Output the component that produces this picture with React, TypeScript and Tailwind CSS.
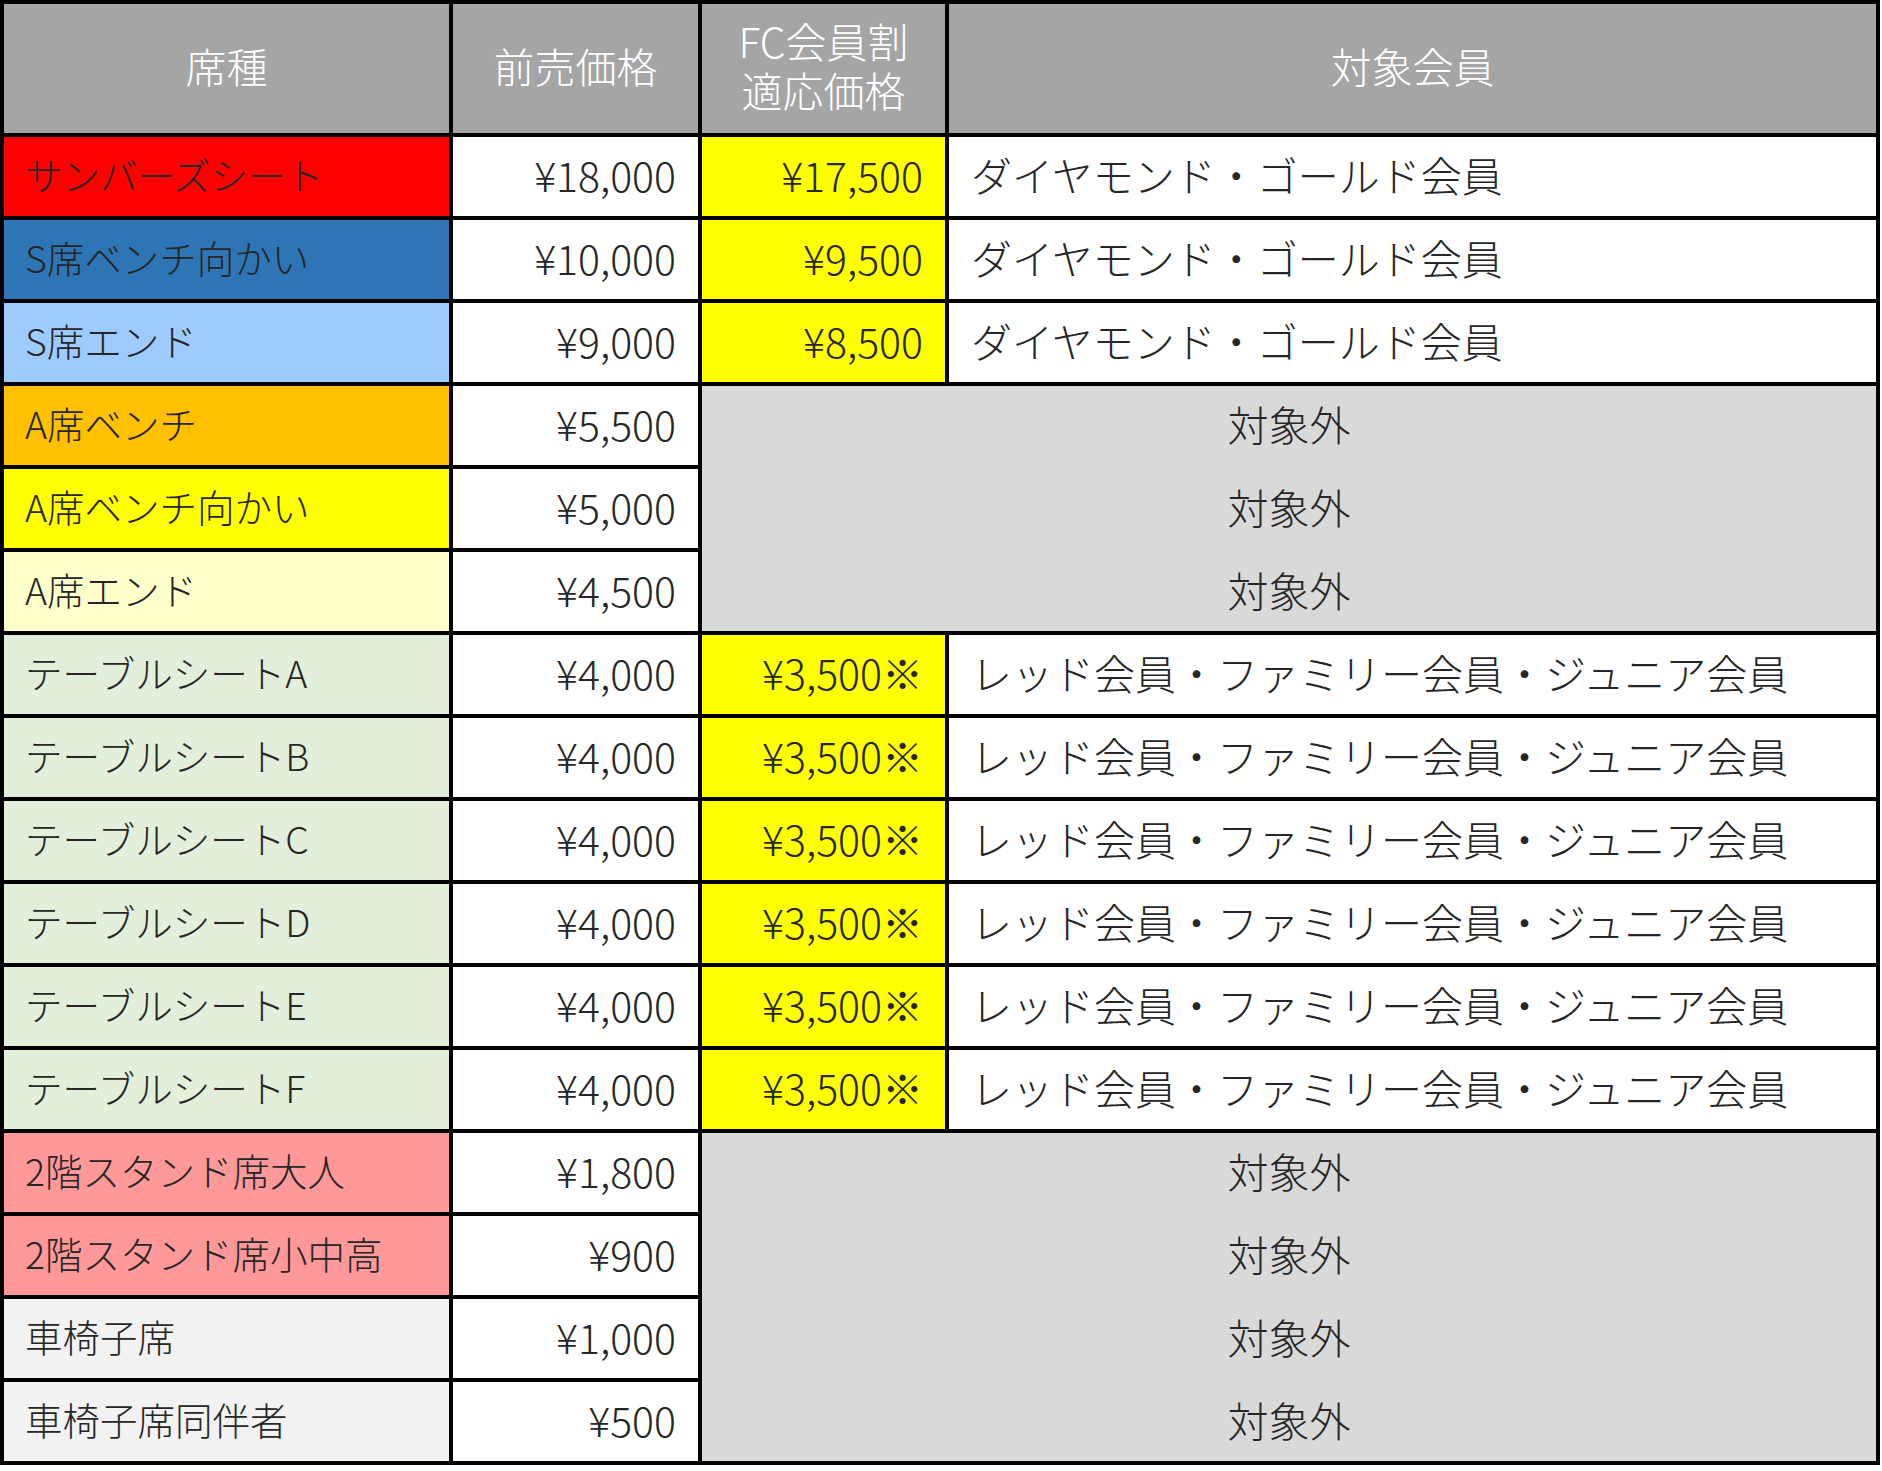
type Row = {
  name: string;
  bg: string;
  price: string;
  fc?: string;
  target?: string;
};

const rows: Row[] = [
  { name: "サンバーズシート", bg: "bg-[#ff0000]", price: "¥18,000", fc: "¥17,500", target: "ダイヤモンド・ゴールド会員" },
  { name: "S席ベンチ向かい", bg: "bg-[#2e75b6]", price: "¥10,000", fc: "¥9,500", target: "ダイヤモンド・ゴールド会員" },
  { name: "S席エンド", bg: "bg-[#9dcbfd]", price: "¥9,000", fc: "¥8,500", target: "ダイヤモンド・ゴールド会員" },
  { name: "A席ベンチ", bg: "bg-[#ffc000]", price: "¥5,500" },
  { name: "A席ベンチ向かい", bg: "bg-[#ffff00]", price: "¥5,000" },
  { name: "A席エンド", bg: "bg-[#ffffcc]", price: "¥4,500" },
  { name: "テーブルシートA", bg: "bg-[#e2efda]", price: "¥4,000", fc: "¥3,500※", target: "レッド会員・ファミリー会員・ジュニア会員" },
  { name: "テーブルシートB", bg: "bg-[#e2efda]", price: "¥4,000", fc: "¥3,500※", target: "レッド会員・ファミリー会員・ジュニア会員" },
  { name: "テーブルシートC", bg: "bg-[#e2efda]", price: "¥4,000", fc: "¥3,500※", target: "レッド会員・ファミリー会員・ジュニア会員" },
  { name: "テーブルシートD", bg: "bg-[#e2efda]", price: "¥4,000", fc: "¥3,500※", target: "レッド会員・ファミリー会員・ジュニア会員" },
  { name: "テーブルシートE", bg: "bg-[#e2efda]", price: "¥4,000", fc: "¥3,500※", target: "レッド会員・ファミリー会員・ジュニア会員" },
  { name: "テーブルシートF", bg: "bg-[#e2efda]", price: "¥4,000", fc: "¥3,500※", target: "レッド会員・ファミリー会員・ジュニア会員" },
  { name: "2階スタンド席大人", bg: "bg-[#ff9999]", price: "¥1,800" },
  { name: "2階スタンド席小中高", bg: "bg-[#ff9999]", price: "¥900" },
  { name: "車椅子席", bg: "bg-[#f2f2f2]", price: "¥1,000" },
  { name: "車椅子席同伴者", bg: "bg-[#f2f2f2]", price: "¥500" },
];

// groups of rows without FC discount are drawn as one merged grey block
function OutOfScope({ count }: { count: number }) {
  return (
    <div
      className={`col-span-2 flex flex-col gap-[4px] bg-[#d9d9d9] ${count === 3 ? "row-span-3" : "row-span-4"}`}
    >
      {Array.from({ length: count }).map((_, i) => (
        <div key={i} className="flex h-[79px] items-center justify-center pb-[5px]">
          対象外
        </div>
      ))}
    </div>
  );
}

export default function App() {
  return (
    <div className="min-h-screen bg-white">
      <div
        className="grid w-[1880px] grid-cols-[445px_245px_243px_927px] gap-[4px] bg-black p-[4px] text-[41px] font-extralight leading-none text-[#262626]"
        style={{ gridTemplateRows: "129px repeat(16, 79px)", fontFamily: '"Noto Sans CJK JP", "Noto Sans", sans-serif' }}
      >
        <div className="flex items-center justify-center bg-[#a5a5a5] pb-[7px] text-white">席種</div>
        <div className="flex items-center justify-center bg-[#a5a5a5] pb-[7px] text-white">前売価格</div>
        <div className="flex items-center justify-center bg-[#a5a5a5] pb-[7px] text-center leading-[49px] text-white">
          <p>
            FC会員割
            <br />
            適応価格
          </p>
        </div>
        <div className="flex items-center justify-center bg-[#a5a5a5] pb-[7px] text-white">対象会員</div>

        {rows.map((r, i) => (
          <div key={r.name} className="contents">
            <div className={`flex items-center pb-[5px] pl-[21px] text-[37.5px] ${r.bg}`}>{r.name}</div>
            <div className="flex items-center justify-end bg-white pb-[5px] pr-[22px]">{r.price}</div>
            {r.fc ? (
              <>
                <div className="flex items-center justify-end bg-[#ffff00] pb-[5px] pr-[22px]">{r.fc}</div>
                <div className="flex items-center bg-white pb-[5px] pl-[22px]">{r.target}</div>
              </>
            ) : i === 3 ? (
              <OutOfScope count={3} />
            ) : i === 12 ? (
              <OutOfScope count={4} />
            ) : null}
          </div>
        ))}
      </div>
    </div>
  );
}
